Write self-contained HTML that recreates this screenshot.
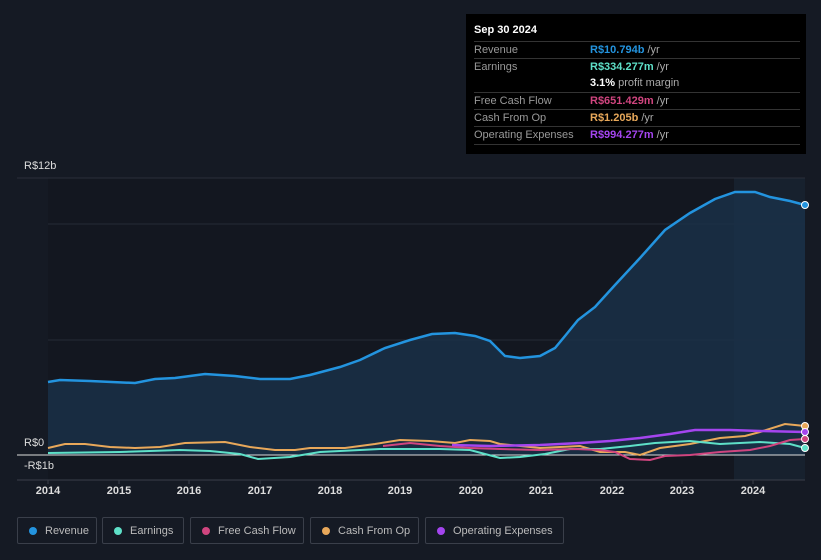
<!DOCTYPE html><html><head><style>
body{margin:0;width:821px;height:560px;background:#151a24;font-family:"Liberation Sans",sans-serif;position:relative;overflow:hidden}
.tt{position:absolute;left:466px;top:14px;width:340px;height:140px;background:#000;color:#999;font-size:11px}
.tt .r{position:absolute;left:8px;width:326px;height:17px;border-top:1px solid #333;line-height:17px}
.tt .r span{position:absolute;left:116px;font-weight:bold}
.tt .r i{font-style:normal;color:#aaa;font-weight:normal}
.lbl{position:absolute;color:#ddd;font-size:11px}
.yr{position:absolute;top:485px;color:#ddd;font-size:11px;font-weight:bold;width:40px;margin-left:-20px;text-align:center}
.lg{position:absolute;top:517px;height:27px;border:1px solid #3a3f4a;border-radius:2px;color:#bbb;font-size:11px;line-height:27px;box-sizing:border-box;padding-left:27px}
.lg b{position:absolute;left:11px;top:9px;width:8px;height:8px;border-radius:50%}
</style></head><body>
<svg width="821" height="560" style="position:absolute;left:0;top:0">
<rect x="48" y="178" width="757" height="302" fill="#131720"/>
<rect x="734" y="178" width="71" height="302" fill="#17212e"/>
<line x1="17" y1="178" x2="805" y2="178" stroke="#2a2f3a"/>
<line x1="48" y1="224" x2="805" y2="224" stroke="#262b36"/>
<line x1="48" y1="340" x2="805" y2="340" stroke="#262b36"/>
<line x1="17" y1="480" x2="805" y2="480" stroke="#3a3f4a"/>
<g stroke="#3a3f4a"><line x1="48" y1="480" x2="48" y2="484"/><line x1="119" y1="480" x2="119" y2="484"/><line x1="189" y1="480" x2="189" y2="484"/><line x1="260" y1="480" x2="260" y2="484"/><line x1="330" y1="480" x2="330" y2="484"/><line x1="400" y1="480" x2="400" y2="484"/><line x1="471" y1="480" x2="471" y2="484"/><line x1="541" y1="480" x2="541" y2="484"/><line x1="612" y1="480" x2="612" y2="484"/><line x1="682" y1="480" x2="682" y2="484"/><line x1="753" y1="480" x2="753" y2="484"/></g>
<path d="M48,382 L60,380 90,381 135,383 155,379 175,378 205,374 235,376 260,379 290,379 310,375 340,367 360,360 385,348 410,340 432,334 455,333 475,336 490,341 505,356 520,358 540,356 555,348 565,336 578,320 595,307 615,285 640,258 665,230 690,213 715,199 735,192 755,192 770,197 790,201 805,205 L805,455 L48,455Z" fill="#1a3048" opacity="0.85"/>
<path d="M48,382 L60,380 90,381 135,383 155,379 175,378 205,374 235,376 260,379 290,379 310,375 340,367 360,360 385,348 410,340 432,334 455,333 475,336 490,341 505,356 520,358 540,356 555,348 565,336 578,320 595,307 615,285 640,258 665,230 690,213 715,199 735,192 755,192 770,197 790,201 805,205" fill="none" stroke="#2394df" stroke-width="2.5"/>
<line x1="17" y1="455" x2="805" y2="455" stroke="#ddd" stroke-width="1"/>
<path d="M48,448 L65,444 85,444 110,447 135,448 160,447 185,443 225,442 250,447 275,450 295,450 310,448 345,448 375,444 400,440 430,441 455,443 470,440 490,441 500,444 540,448 580,446 600,452 625,452 640,455 660,448 690,444 720,438 745,436 760,432 785,424 805,426" fill="none" stroke="#e8a85a" stroke-width="2"/>
<path d="M48,453 L120,452 180,450 210,451 240,454 258,459 290,457 320,452 380,449 440,449 470,450 485,454 500,458 520,457 545,454 570,449 600,449 630,446 655,443 690,441 720,444 760,442 790,444 805,448" fill="none" stroke="#5ee0c8" stroke-width="2"/>
<path d="M383,446 L410,443 440,446 470,448 500,449 540,450 575,449 600,450 615,452 630,459 650,460 665,456 690,455 720,452 750,450 770,446 790,440 805,439" fill="none" stroke="#d0457f" stroke-width="2"/>
<path d="M452,445 L490,446 540,445 580,443 610,441 640,438 670,434 695,430 730,430 760,431 805,432" fill="none" stroke="#a445ef" stroke-width="2.5"/>
<circle cx="805" cy="205" r="3.5" fill="#2394df" stroke="#fff"/>
<circle cx="805" cy="426" r="3.5" fill="#e8a85a" stroke="#fff"/>
<circle cx="805" cy="432" r="3.5" fill="#a445ef" stroke="#fff"/>
<circle cx="805" cy="439" r="3.5" fill="#d0457f" stroke="#fff"/>
<circle cx="805" cy="448" r="3.5" fill="#5ee0c8" stroke="#fff"/>
</svg>
<div class="lbl" style="left:24px;top:160px">R$12b</div>
<div class="lbl" style="left:24px;top:437px">R$0</div>
<div class="lbl" style="left:24px;top:460px">-R$1b</div>
<div class="yr" style="left:48px">2014</div><div class="yr" style="left:119px">2015</div><div class="yr" style="left:189px">2016</div><div class="yr" style="left:260px">2017</div><div class="yr" style="left:330px">2018</div><div class="yr" style="left:400px">2019</div><div class="yr" style="left:471px">2020</div><div class="yr" style="left:541px">2021</div><div class="yr" style="left:612px">2022</div><div class="yr" style="left:682px">2023</div><div class="yr" style="left:753px">2024</div>
<div class="tt">
<div style="position:absolute;left:8px;top:10px;color:#fff;font-weight:bold">Sep 30 2024</div>
<div class="r" style="top:27px">Revenue<span style="color:#2394df">R$10.794b <i>/yr</i></span></div>
<div class="r" style="top:44px">Earnings<span style="color:#5ee0c8">R$334.277m <i>/yr</i></span></div>
<div class="r" style="top:61px;border-top:none"><span style="color:#fff">3.1% <i>profit margin</i></span></div>
<div class="r" style="top:78px">Free Cash Flow<span style="color:#d0457f">R$651.429m <i>/yr</i></span></div>
<div class="r" style="top:95px">Cash From Op<span style="color:#e8a85a">R$1.205b <i>/yr</i></span></div>
<div class="r" style="top:112px;border-bottom:1px solid #333">Operating Expenses<span style="color:#a445ef">R$994.277m <i>/yr</i></span></div>
</div>
<div class="lg" style="left:17px;width:80px"><b style="background:#2394df"></b>Revenue</div>
<div class="lg" style="left:102px;width:82px"><b style="background:#5ee0c8"></b>Earnings</div>
<div class="lg" style="left:190px;width:114px"><b style="background:#d0457f"></b>Free Cash Flow</div>
<div class="lg" style="left:310px;width:109px"><b style="background:#e8a85a"></b>Cash From Op</div>
<div class="lg" style="left:425px;width:139px"><b style="background:#a445ef"></b>Operating Expenses</div>
</body></html>
